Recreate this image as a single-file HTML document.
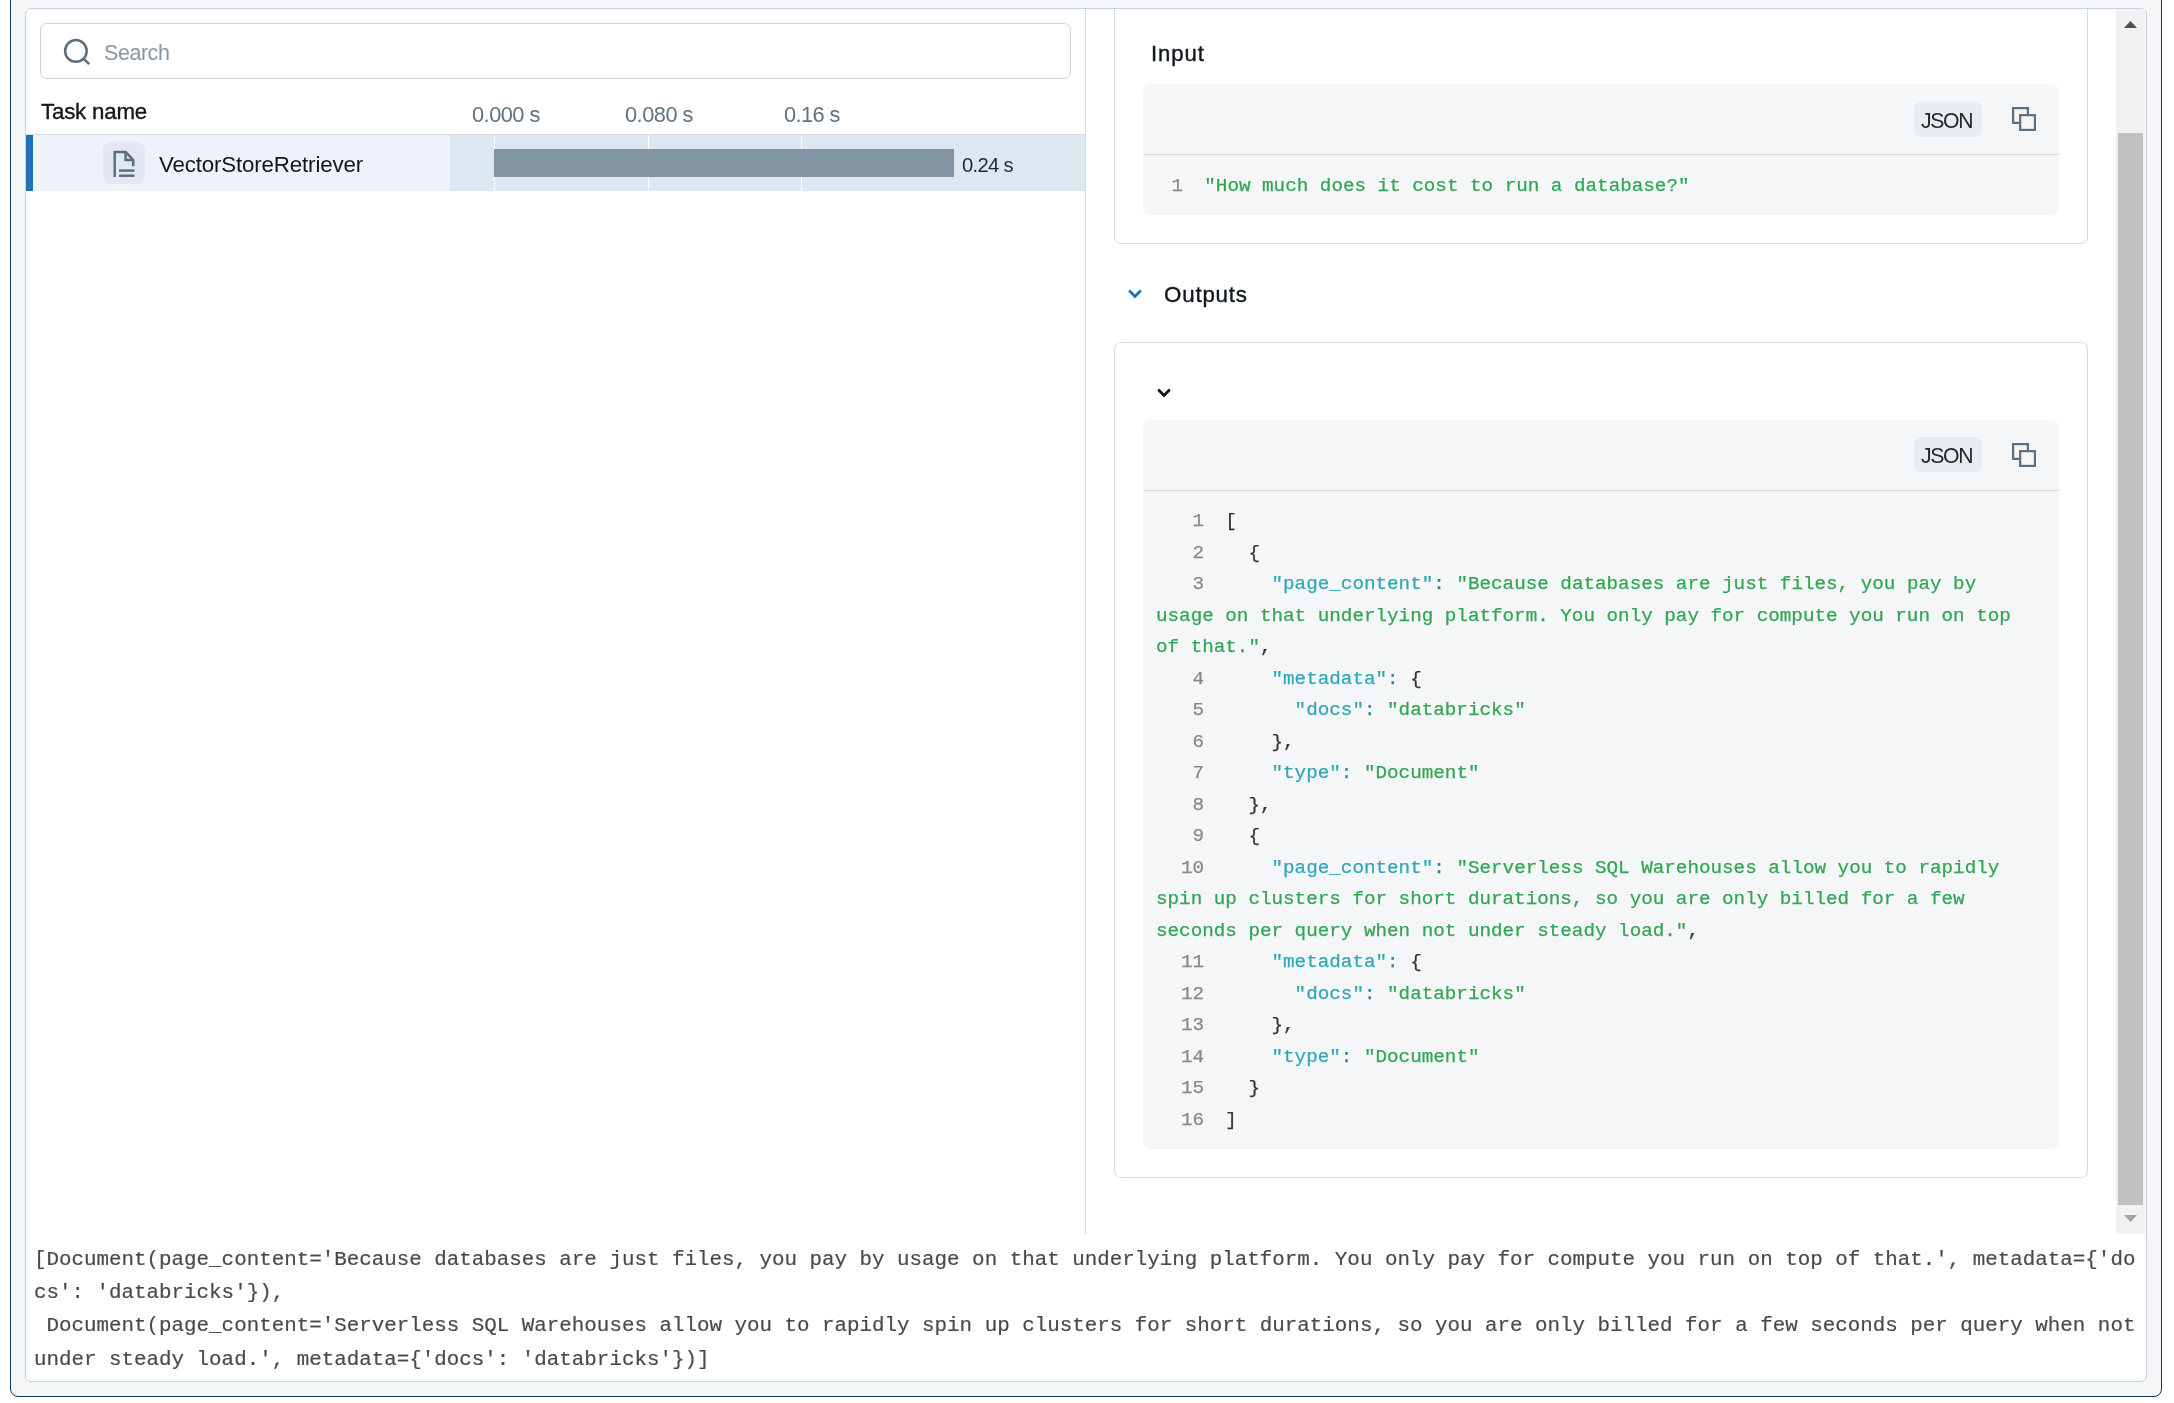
<!DOCTYPE html>
<html><head><meta charset="utf-8">
<style>
html,body{margin:0;padding:0;background:#fff;width:2174px;height:1403px;overflow:hidden;position:relative;font-family:"Liberation Sans",sans-serif}
.t,.mono{will-change:transform}
div,span,svg{box-sizing:border-box}
.a{position:absolute}
.outer{left:10px;top:-20px;width:2152px;height:1417px;border:1px solid #0b3a5e;border-radius:0 0 8px 8px;background:#f5f6f8}
.panel{left:25px;top:8px;width:2122px;height:1374px;border:1px solid #c3cfda;border-radius:6px;background:#fff}
.search{left:40px;top:23px;width:1031px;height:56px;border:1px solid #cbd4dd;border-radius:7px;background:#fff}
.t{white-space:pre;line-height:1}
.mono{font-family:"Liberation Mono",monospace;white-space:pre;-webkit-text-stroke:0.25px currentColor}
.card{border:1px solid #d3dbe3;border-radius:7px;background:#fff}
.code{background:#f5f6f8;border-radius:7px}
.chip{background:#e8ebf0;border-radius:7px}
.ln{color:#888;display:inline-block;width:48px;text-align:right;margin-right:-1.8px}
.p{color:#333}
.k{color:#30a7b7}
.c{color:#2b8795}
.s{color:#31a653}
</style></head><body>
<div class="a outer"></div>
<div class="a panel"></div>

<!-- search -->
<div class="a search"></div>
<svg class="a" style="left:60px;top:35px" width="34" height="34" viewBox="0 0 34 34">
  <circle cx="15.9" cy="15.9" r="10.8" fill="none" stroke="#5a6f7e" stroke-width="2.5"/>
  <line x1="23.8" y1="23.8" x2="29.2" y2="29.2" stroke="#5a6f7e" stroke-width="2.5"/>
</svg>
<div class="a t" id="search" style="left:103.7px;top:42.7px;font-size:21.5px;letter-spacing:-0.45px;color:#8497a6">Search</div>

<!-- header -->
<div class="a t" id="taskname" style="left:40.8px;top:101.1px;font-size:22.3px;letter-spacing:-0.2px;color:#11171c;-webkit-text-stroke:0.35px #11171c">Task name</div>
<div class="a t" style="left:471.6px;top:104.3px;font-size:21.8px;letter-spacing:-0.52px;color:#5f7281">0.000 s</div>
<div class="a t" style="left:625.3px;top:104.4px;font-size:21.8px;letter-spacing:-0.5px;color:#5f7281">0.080 s</div>
<div class="a t" style="left:783.7px;top:104.1px;font-size:21.8px;letter-spacing:-0.58px;color:#5f7281">0.16 s</div>
<div class="a" style="left:26px;top:134px;width:1059px;height:1px;background:#d3dbe3"></div>

<!-- row -->
<div class="a" style="left:26px;top:135px;width:424px;height:56px;background:#eef3fa"></div>
<div class="a" style="left:450px;top:135px;width:635px;height:56px;background:#dce7f2"></div>
<div class="a" style="left:26px;top:135px;width:7px;height:56px;background:#2272b4"></div>
<div class="a" style="left:494px;top:135px;width:1px;height:56px;background:#fff"></div>
<div class="a" style="left:648px;top:135px;width:1px;height:56px;background:#fff"></div>
<div class="a" style="left:801px;top:135px;width:1px;height:56px;background:#fff"></div>
<div class="a" style="left:494px;top:149px;width:460px;height:28px;background:#8395a3"></div>
<div class="a t" style="left:961.9px;top:154.9px;font-size:20.2px;letter-spacing:-0.68px;color:#1f272d">0.24 s</div>
<div class="a" style="left:103px;top:142px;width:42px;height:42px;border-radius:8px;background:#e4e6f2"></div>
<svg class="a" style="left:103px;top:142px" width="42" height="42" viewBox="0 0 42 42">
  <path d="M11.7 35 V10.1 H22.8 L30.2 18 V24.3" fill="none" stroke="#5a6f7e" stroke-width="2.5"/>
  <path d="M22.6 10.1 V17.9 H30.2" fill="none" stroke="#5a6f7e" stroke-width="2.5"/>
  <line x1="16" y1="28.6" x2="31.5" y2="28.6" stroke="#5a6f7e" stroke-width="2.5"/>
  <line x1="16" y1="33.7" x2="31.5" y2="33.7" stroke="#5a6f7e" stroke-width="2.5"/>
</svg>
<div class="a t" id="vsr" style="left:159.4px;top:153.9px;font-size:22.3px;letter-spacing:-0.15px;color:#11171c">VectorStoreRetriever</div>

<!-- divider -->
<div class="a" style="left:1085px;top:9px;width:1px;height:1225px;background:#d3dbe3"></div>

<!-- right pane (clipped) -->
<div class="a" style="left:1086px;top:9px;width:1030px;height:1225px;overflow:hidden">
  <div class="a card" style="left:28px;top:-60px;width:974px;height:295px"></div>
  <div class="a t" id="input" style="left:65.1px;top:34.1px;font-size:22.1px;letter-spacing:0.91px;color:#11171c;-webkit-text-stroke:0.4px #11171c">Input</div>
  <div class="a code" style="left:57px;top:75px;width:916px;height:131px"></div>
  <div class="a" style="left:57px;top:145px;width:916px;height:1px;background:#d3dbe3"></div>
  <div class="a chip" style="left:828px;top:93px;width:68px;height:35px"></div>
  <div class="a t" style="left:834.5px;top:100.8px;font-size:21.2px;letter-spacing:-1.35px;color:#1f272d">JSON</div>
  <svg class="a" style="left:926px;top:98px" width="24" height="24" viewBox="0 0 24 24">
    <rect x="1.1" y="1.1" width="14.8" height="14.8" fill="none" stroke="#5a6f7f" stroke-width="2.2"/>
    <rect x="8.15" y="8.15" width="14.8" height="14.8" fill="#f5f6f8" stroke="#5a6f7f" stroke-width="2.2"/>
  </svg>
  <div class="a mono" style="left:70px;top:161.5px;font-size:19.25px;line-height:31.5px"><span class="ln" style="width:27px">1</span>  <span class="s">"How much does it cost to run a database?"</span></div>

  <!-- outputs -->
  <svg class="a" style="left:42px;top:280px" width="14" height="10" viewBox="0 0 14 10">
    <path d="M1.2 1.5 L7 7.5 L12.8 1.5" fill="none" stroke="#2272b4" stroke-width="2.8"/>
  </svg>
  <div class="a t" id="outputs" style="left:78.2px;top:274.8px;font-size:22.3px;letter-spacing:0.82px;color:#11171c;-webkit-text-stroke:0.4px #11171c">Outputs</div>

  <div class="a card" style="left:28px;top:333px;width:974px;height:836px"></div>
  <svg class="a" style="left:71px;top:379px" width="14" height="10" viewBox="0 0 14 10">
    <path d="M1.2 1.5 L7 7.5 L12.8 1.5" fill="none" stroke="#11171c" stroke-width="2.8"/>
  </svg>
  <div class="a code" style="left:57px;top:411px;width:916px;height:729px"></div>
  <div class="a" style="left:57px;top:481px;width:916px;height:1px;background:#d3dbe3"></div>
  <div class="a chip" style="left:828px;top:428px;width:68px;height:35px"></div>
  <div class="a t" style="left:834.5px;top:436.3px;font-size:21.2px;letter-spacing:-1.35px;color:#1f272d">JSON</div>
  <svg class="a" style="left:926px;top:434px" width="24" height="24" viewBox="0 0 24 24">
    <rect x="1.1" y="1.1" width="14.8" height="14.8" fill="none" stroke="#5a6f7f" stroke-width="2.2"/>
    <rect x="8.15" y="8.15" width="14.8" height="14.8" fill="#f5f6f8" stroke="#5a6f7f" stroke-width="2.2"/>
  </svg>
  <div class="a mono" id="code2" style="left:70px;top:497px;font-size:19.25px;line-height:31.5px"><span class="ln">1</span>  <span class="p">[</span>
<span class="ln">2</span>  <span class="p">  {</span>
<span class="ln">3</span>  <span class="k">    "page_content"</span><span class="c">:</span> <span class="s">"Because databases are just files, you pay by</span>
<span class="s">usage on that underlying platform. You only pay for compute you run on top</span>
<span class="s">of that."</span><span class="p">,</span>
<span class="ln">4</span>  <span class="k">    "metadata"</span><span class="c">:</span> <span class="p">{</span>
<span class="ln">5</span>  <span class="k">      "docs"</span><span class="c">:</span> <span class="s">"databricks"</span>
<span class="ln">6</span>  <span class="p">    },</span>
<span class="ln">7</span>  <span class="k">    "type"</span><span class="c">:</span> <span class="s">"Document"</span>
<span class="ln">8</span>  <span class="p">  },</span>
<span class="ln">9</span>  <span class="p">  {</span>
<span class="ln">10</span>  <span class="k">    "page_content"</span><span class="c">:</span> <span class="s">"Serverless SQL Warehouses allow you to rapidly</span>
<span class="s">spin up clusters for short durations, so you are only billed for a few</span>
<span class="s">seconds per query when not under steady load."</span><span class="p">,</span>
<span class="ln">11</span>  <span class="k">    "metadata"</span><span class="c">:</span> <span class="p">{</span>
<span class="ln">12</span>  <span class="k">      "docs"</span><span class="c">:</span> <span class="s">"databricks"</span>
<span class="ln">13</span>  <span class="p">    },</span>
<span class="ln">14</span>  <span class="k">    "type"</span><span class="c">:</span> <span class="s">"Document"</span>
<span class="ln">15</span>  <span class="p">  }</span>
<span class="ln">16</span>  <span class="p">]</span></div>
</div>

<!-- scrollbar -->
<div class="a" style="left:2116px;top:9px;width:29px;height:1225px;background:#f1f1f1"></div>
<div class="a" style="left:2118px;top:133px;width:25px;height:1072px;background:#c1c1c1"></div>
<svg class="a" style="left:2123px;top:20px" width="15" height="9" viewBox="0 0 15 9"><path d="M1 8 L7.5 1 L14 8 Z" fill="#505050"/></svg>
<svg class="a" style="left:2123px;top:1214px" width="15" height="9" viewBox="0 0 15 9"><path d="M1 1 L7.5 8 L14 1 Z" fill="#a3a3a3"/></svg>

<!-- bottom output -->
<div class="a mono" id="out" style="left:34px;top:1242.5px;-webkit-text-stroke:0.2px #4a4a4a;font-size:20.85px;line-height:33.23px;color:#4a4a4a">[Document(page_content='Because databases are just files, you pay by usage on that underlying platform. You only pay for compute you run on top of that.', metadata={'do
cs': 'databricks'}),
 Document(page_content='Serverless SQL Warehouses allow you to rapidly spin up clusters for short durations, so you are only billed for a few seconds per query when not
under steady load.', metadata={'docs': 'databricks'})]</div>
</body></html>
